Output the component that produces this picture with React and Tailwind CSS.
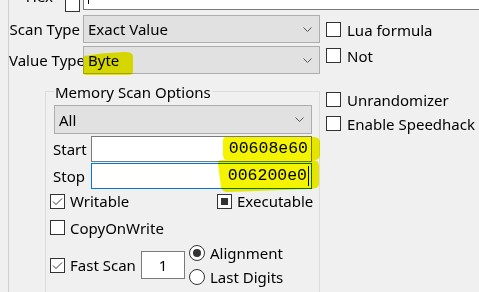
import React from 'react';

const Box = ({ checked, mixed, className = '' }) => (
  <span className={`w-[15px] h-[15px] shrink-0 border border-[#333333] bg-white flex items-center justify-center ${className}`}>
    {checked && (
      <svg width="13" height="13" viewBox="0 0 13 13">
        <path d="M2 6.5 L5 9.5 L11 3.5" fill="none" stroke="#333333" strokeWidth="1" />
      </svg>
    )}
    {mixed && <span className="w-[7px] h-[7px] bg-[#333333]" />}
  </span>
);

const Radio = ({ on }) => (
  <span className="w-[16px] h-[16px] shrink-0 rounded-full border border-[#333333] bg-white flex items-center justify-center">
    {on && <span className="w-[8px] h-[8px] rounded-full bg-[#333333]" />}
  </span>
);

const CheckRow = ({ label, checked, mixed, className = '' }) => (
  <div className={`h-[15px] flex items-center gap-[5px] ${className}`}>
    <Box checked={checked} mixed={mixed} />
    <span className="whitespace-nowrap">{label}</span>
  </div>
);

const Chevron = () => (
  <svg width="9" height="5" viewBox="0 0 9 5">
    <path d="M0.5 0.5 L4.5 4.5 L8.5 0.5" fill="none" stroke="#555555" strokeWidth="1" />
  </svg>
);

const Combo = ({ value, className = '' }) => (
  <div className={`flex items-center justify-between bg-[#e1e1e1] border border-[#adadad] pl-[4px] pr-[7px] ${className}`}>
    <span>{value}</span>
    <Chevron />
  </div>
);

export default function App() {
  return (
    <div className="w-[479px] h-[292px] overflow-hidden bg-[#f0f0f0] relative font-['Noto_Sans',sans-serif] text-[15px] leading-[20px] text-black">
      <div className="ml-[8px] h-full border-l border-[#d0d0d0] flex flex-col">
        {/* Hex row, cut off at the top */}
        <div className="-mt-[18px] h-[28px] flex items-center shrink-0">
          <span className="w-[44px] shrink-0 text-right">Hex</span>
          <Box className="ml-[12px] self-end -mb-[2px]" />
          <div className="ml-[3px] h-[28px] w-[420px] shrink-0 bg-white border border-[#7a7a7a] flex items-center pl-[4px]">
            <span className="w-[1px] h-[16px] bg-black" />
          </div>
        </div>

        <div className="mt-[5px] flex">
          {/* left column */}
          <div className="w-[311px] shrink-0 flex flex-col">
            <div className="h-[28px] flex items-center">
              <span className="w-[71px] shrink-0 text-right whitespace-nowrap">Scan Type</span>
              <Combo value="Exact Value" className="ml-[3px] w-[237px] h-[28px]" />
            </div>
            <div className="mt-[3px] h-[28px] flex items-center">
              <span className="w-[71px] shrink-0 text-right whitespace-nowrap">Value Type</span>
              <Combo value="Byte" className="ml-[3px] w-[237px] h-[28px]" />
            </div>

            {/* Memory Scan Options group */}
            <div className="ml-[36px] mt-[17px] w-[275px] h-[220px] border border-[#dcdcdc] flex flex-col">
              <span className="-mt-[10px] ml-[8px] px-[1px] w-fit bg-[#f0f0f0] whitespace-nowrap">Memory Scan Options</span>
              <Combo value="All" className="mt-[3px] ml-[8px] w-[258px] h-[29px]" />
              <div className="mt-[2px] h-[26px] flex items-center">
                <span className="ml-[7px] w-[38px] shrink-0">Start</span>
                <div className="w-[221px] h-[26px] bg-white border border-[#7a7a7a] flex items-center justify-end pr-[3px] font-['Liberation_Mono',monospace] text-[16.5px]">
                  00608e60
                </div>
              </div>
              <div className="mt-[1px] h-[26px] flex items-center">
                <span className="ml-[7px] w-[38px] shrink-0">Stop</span>
                <div className="w-[221px] h-[26px] bg-white border border-[#0078d7] flex items-center justify-end pr-[2px] font-['Liberation_Mono',monospace] text-[16.5px]">
                  <span>006200e0</span>
                  <span className="ml-[1px] w-[1px] h-[20px] bg-black" />
                </div>
              </div>
              <div className="mt-[4px] h-[16px] flex items-center ml-[4px]">
                <CheckRow label="Writable" checked className="w-[167px]" />
                <CheckRow label="Executable" mixed />
              </div>
              <CheckRow label="CopyOnWrite" className="mt-[11px] ml-[4px]" />
              <div className="mt-[10px] h-[40px] flex items-center ml-[4px]">
                <Box checked />
                <span className="ml-[5px] w-[71px] shrink-0 whitespace-nowrap">Fast Scan</span>
                <div className="w-[44px] h-[28px] bg-white border border-[#7a7a7a] flex items-center justify-center">1</div>
                <div className="ml-[4px] flex flex-col gap-[8px]">
                  <div className="h-[16px] flex items-center gap-[5px]">
                    <Radio on />
                    <span>Alignment</span>
                  </div>
                  <div className="h-[16px] flex items-center gap-[5px]">
                    <Radio />
                    <span className="whitespace-nowrap">Last Digits</span>
                  </div>
                </div>
              </div>
            </div>
          </div>

          {/* right column */}
          <div className="pt-[7px] pl-[6px] flex flex-col">
            <CheckRow label="Lua formula" className="gap-[6px]" />
            <CheckRow label="Not" className="mt-[11px] gap-[6px]" />
            <CheckRow label="Unrandomizer" className="mt-[29px] gap-[6px]" />
            <CheckRow label="Enable Speedhack" className="mt-[9px] gap-[6px]" />
          </div>
        </div>
      </div>

      {/* highlighter marks */}
      <svg className="absolute inset-0 pointer-events-none mix-blend-multiply" width="479" height="292" viewBox="0 0 479 292">
        <path d="M84 56 Q100 53 124 52 Q133 52 133 56 L133 72 Q133 75 128 75 L86 75 Q83 75 83 72 Z" fill="#f2f200" />
        <path d="M226 137 L314 137 Q320 137 320 143 L320 155 Q320 160 314 160 L227 160 Q223 160 223 155 L223 141 Q223 137 226 137 Z" fill="#f4f400" />
        <path d="M221 160 L313 160 Q319 160 319 166 L319 184 Q319 188 312 189 L228 192 Q222 192 221 187 L218 164 Q218 160 221 160 Z" fill="#f4f400" />
      </svg>
    </div>
  );
}
